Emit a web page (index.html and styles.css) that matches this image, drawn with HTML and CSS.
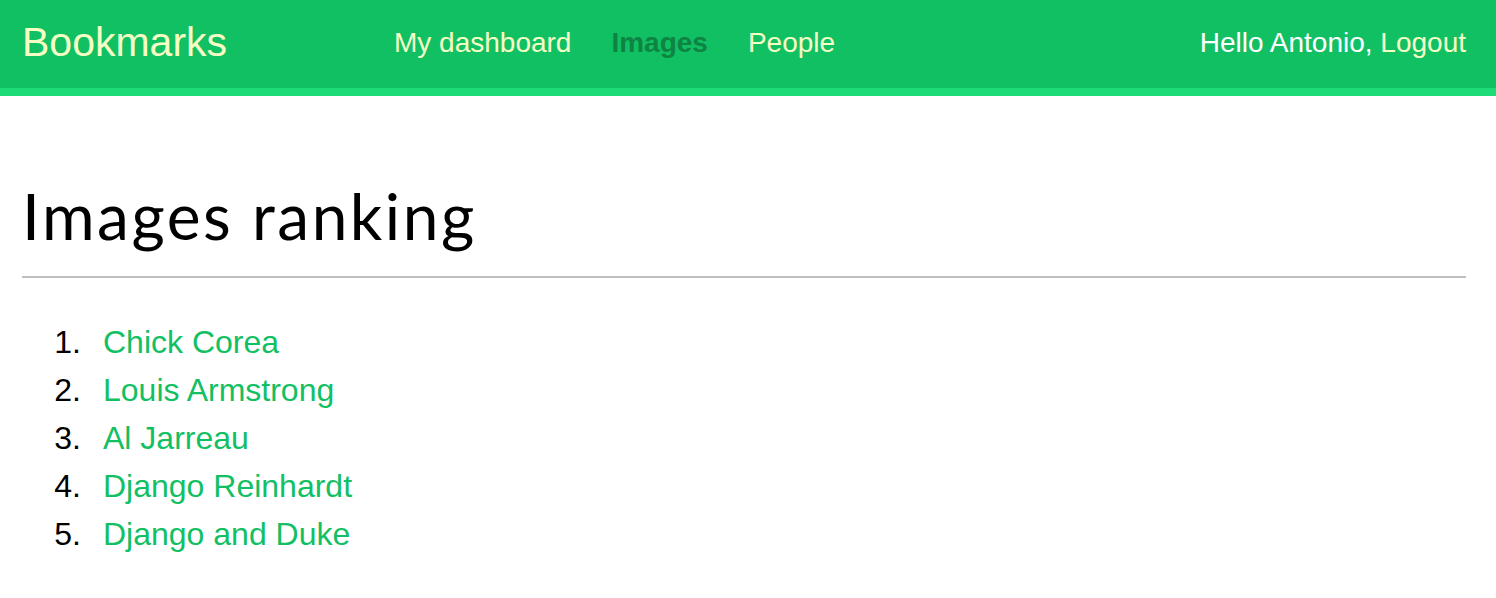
FILE: index.html
```html
<!DOCTYPE html>
<html lang="en">
<head>
<meta charset="utf-8">
<title>Images ranking</title>
<link rel="stylesheet" href="styles.css">
</head>
<body>
<header class="header">
  <span class="logo">Bookmarks</span>
  <nav class="menu">
    <a class="menu-item" href="#">My dashboard</a>
    <a class="menu-item selected" href="#">Images</a>
    <a class="menu-item" href="#">People</a>
  </nav>
  <span class="user">Hello Antonio, <a class="user-link" href="#">Logout</a></span>
</header>
<main class="content">
  <h1 class="title">Images ranking</h1>
  <ol class="ranking">
    <li><a href="#">Chick Corea</a></li>
    <li><a href="#">Louis Armstrong</a></li>
    <li><a href="#">Al Jarreau</a></li>
    <li><a href="#">Django Reinhardt</a></li>
    <li><a href="#">Django and Duke</a></li>
  </ol>
</main>
</body>
</html>
```
FILE: styles.css
```css
html, body {
  margin: 0;
  padding: 0;
  background: #fff;
  font-family: "Liberation Sans", Arial, sans-serif;
}
a { text-decoration: none; }

.header {
  display: flex;
  align-items: center;
  height: 88px;
  background: #12c064;
  border-bottom: 8px solid #1ddc78;
  padding: 0 30px 0 22px;
  box-sizing: content-box;
}
.logo {
  font-size: 41px;
  color: #f5ffc4;
  width: 372px;
  flex: none;
  margin-top: -3px;
}
.menu {
  display: flex;
  gap: 40px;
  flex: 1;
  margin-top: -2px;
}
.menu-item {
  font-size: 28px;
  color: #f5ffc4;
}
.menu-item.selected {
  color: #0d8442;
  font-weight: bold;
}
.user {
  font-size: 28px;
  color: #fff;
  margin-top: -2px;
}
.user-link { color: #f5ffc4; }

.content {
  padding: 0 30px 0 22px;
}
.title {
  font-family: Lato, "Noto Sans", sans-serif;
  font-weight: 400;
  font-size: 64px;
  letter-spacing: 2.5px;
  line-height: 1;
  margin: 0;
  padding: 88px 0 28px;
  border-bottom: 2px solid #bfbfbf;
}
.ranking {
  margin: 40px 0 0;
  padding-left: 0;
  list-style: none;
  counter-reset: rank;
  font-size: 32px;
  line-height: 48px;
  color: #000;
}
.ranking li {
  display: flex;
  counter-increment: rank;
}
.ranking li::before {
  content: counter(rank) ".";
  width: 59px;
  text-align: right;
  margin-right: 22px;
  flex: none;
}
.ranking a { color: #12c064; }
```
